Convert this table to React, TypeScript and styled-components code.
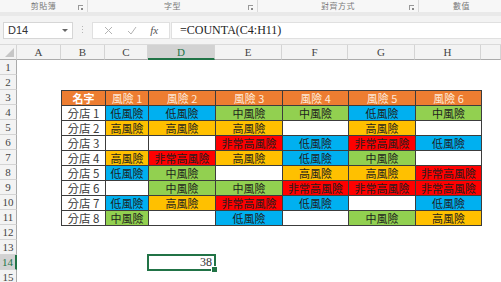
import React from "react";
import styled, { createGlobalStyle } from "styled-components";

type Level = "low" | "mid" | "high" | "vhigh" | "";

const GlobalStyle = createGlobalStyle`
  html, body {
    margin: 0;
    padding: 0;
    background: #fff;
  }
`;

const fills: Record<string, string> = {
  low: "#00b0f0",
  mid: "#92d050",
  high: "#ffc000",
  vhigh: "#ff0000",
  "": "#ffffff",
};

const labels: Record<string, string> = {
  low: "低風險",
  mid: "中風險",
  high: "高風險",
  vhigh: "非常高風險",
  "": "",
};

const rows: { name: string; risks: Level[] }[] = [
  { name: "分店 1", risks: ["low", "low", "mid", "mid", "low", "mid"] },
  { name: "分店 2", risks: ["high", "high", "high", "", "high", ""] },
  { name: "分店 3", risks: ["", "", "vhigh", "low", "vhigh", "low"] },
  { name: "分店 4", risks: ["high", "vhigh", "high", "low", "mid", ""] },
  { name: "分店 5", risks: ["low", "mid", "", "high", "high", "vhigh"] },
  { name: "分店 6", risks: ["", "mid", "mid", "vhigh", "vhigh", "vhigh"] },
  { name: "分店 7", risks: ["low", "high", "vhigh", "low", "", "low"] },
  { name: "分店 8", risks: ["mid", "", "low", "", "mid", "high"] },
];

const columns = ["A", "B", "C", "D", "E", "F", "G", "H", ""];

const Page = styled.div`
  width: 501px;
  height: 282px;
  overflow: hidden;
  background: #fff;
  font-family: "Noto Sans CJK TC", "Noto Sans", sans-serif;
`;

/* ribbon group labels */
const Ribbon = styled.div`
  display: flex;
  height: 12px;
  background: #f7f7f7;
  border-bottom: 4px solid #e9e9e9;
`;

const Group = styled.div<{ $w: number; $last?: boolean }>`
  position: relative;
  flex: 0 0 ${({ $w }) => $w}px;
  display: flex;
  align-items: center;
  justify-content: center;
  border-right: ${({ $last }) => ($last ? "none" : "1px solid #dadada")};
  font-size: 8px;
  line-height: 12px;
  color: #7a7a7a;
  letter-spacing: 0.5px;
`;

const Launcher = styled.span`
  position: absolute;
  right: 4px;
  bottom: 2px;
  width: 4px;
  height: 4px;
  border-left: 1px solid #999;
  border-top: 1px solid #999;
  &::after {
    content: "";
    position: absolute;
    right: 0;
    bottom: 0;
    width: 2px;
    height: 2px;
    background: #888;
  }
`;

/* formula bar */
const FormulaRow = styled.div`
  display: flex;
  align-items: center;
  height: 28px;
  background: #f3f3f3;
`;

const NameBox = styled.div`
  display: flex;
  align-items: center;
  margin-left: 3px;
  width: 70px;
  height: 17px;
  box-sizing: border-box;
  background: #fff;
  border: 1px solid #d6d6d6;
  padding-left: 4px;
  font-family: "Liberation Sans", Arial, sans-serif;
  font-size: 11px;
  color: #333;
`;

const Caret = styled.span`
  margin-left: auto;
  margin-right: 4px;
  width: 0;
  height: 0;
  border-left: 3px solid transparent;
  border-right: 3px solid transparent;
  border-top: 3px solid #666;
`;

const Dots = styled.div`
  margin-left: 9px;
  width: 1px;
  height: 9px;
  background: repeating-linear-gradient(
    to bottom,
    #b5b5b5 0 1px,
    transparent 1px 3px
  );
`;

const FxBox = styled.div`
  display: flex;
  align-items: center;
  justify-content: space-around;
  margin-left: 9px;
  width: 78px;
  height: 17px;
  box-sizing: border-box;
  background: #fff;
  border: 1px solid #e0e0e0;
  padding: 0 4px;
`;

const Fx = styled.span`
  font-family: "Liberation Serif", serif;
  font-style: italic;
  font-size: 11px;
  color: #555;
`;

const FormulaInput = styled.div`
  flex: 1;
  display: flex;
  align-items: center;
  margin-left: 1px;
  height: 17px;
  box-sizing: border-box;
  background: #fff;
  border: 1px solid #e0e0e0;
  border-right: none;
  padding-left: 8px;
  font-family: "Liberation Serif", serif;
  font-size: 12px;
  color: #222;
`;

/* worksheet */
const Sheet = styled.div`
  display: grid;
  grid-template-columns: 17px 44px 44px 43px 67px 67px 66px 67px 66px 1fr;
  grid-template-rows: 15px repeat(15, 15px);
  border-top: 1px solid #dadada;
  background: #fff;
`;

const Corner = styled.div`
  position: relative;
  grid-column: 1;
  grid-row: 1;
  background: #f3f3f3;
  border-right: 1px solid #d4d4d4;
  border-bottom: 1px solid #ababab;
  &::after {
    content: "";
    position: absolute;
    right: 2px;
    bottom: 2px;
    border-left: 9px solid transparent;
    border-bottom: 9px solid #c6c6c6;
  }
`;

const ColHead = styled.div<{ $active?: boolean }>`
  grid-row: 1;
  display: flex;
  align-items: center;
  justify-content: center;
  background: ${({ $active }) => ($active ? "#d2d2d2" : "#f3f3f3")};
  border-right: 1px solid #d4d4d4;
  border-bottom: ${({ $active }) =>
    $active ? "2px solid #217346" : "1px solid #ababab"};
  font-family: "Liberation Serif", serif;
  font-size: 11px;
  color: ${({ $active }) => ($active ? "#217346" : "#444")};
`;

const RowHead = styled.div<{ $active?: boolean }>`
  grid-column: 1;
  display: flex;
  align-items: center;
  justify-content: center;
  background: ${({ $active }) => ($active ? "#d2d2d2" : "#f3f3f3")};
  border-bottom: 1px solid #d4d4d4;
  border-right: ${({ $active }) =>
    $active ? "2px solid #217346" : "1px solid #ababab"};
  font-family: "Liberation Serif", serif;
  font-size: 11px;
  color: ${({ $active }) => ($active ? "#217346" : "#444")};
`;

const Table = styled.div`
  grid-column: 3 / 10;
  grid-row: 4 / 13;
  align-self: start;
  justify-self: start;
  display: grid;
  grid-template-columns: 43px 42px 66px 66px 65px 66px 65px;
  grid-auto-rows: 14px;
  gap: 1px;
  padding: 1px;
  background: #3c3c3c;
  position: relative;
  z-index: 1;
`;

const Cell = styled.div<{ $fill: string; $head?: boolean }>`
  display: flex;
  align-items: center;
  justify-content: center;
  background: ${({ $fill }) => $fill};
  font-size: 11px;
  line-height: 13px;
  white-space: nowrap;
  color: ${({ $head }) => ($head ? "#fde9d9" : "#1e1e1e")};
`;

const NameHead = styled(Cell)`
  font-weight: bold;
  color: #fff;
`;

const ShopCell = styled(Cell)`
  color: #3a3a3a;
  font-size: 11.5px;
`;

const Selected = styled.div`
  position: relative;
  grid-column: 5;
  grid-row: 15;
  margin: -1px;
  border: 2px solid #217346;
  display: flex;
  align-items: center;
  justify-content: flex-end;
  padding-right: 2px;
  font-family: "Liberation Serif", serif;
  font-size: 12px;
  color: #333;
`;

const Handle = styled.span`
  position: absolute;
  right: -4px;
  bottom: -4px;
  width: 5px;
  height: 5px;
  background: #217346;
  border: 1px solid #fff;
`;

const Cross = () => (
  <svg width="9" height="9" viewBox="0 0 9 9">
    <path d="M1 1L8 8M8 1L1 8" stroke="#b3b3b3" strokeWidth="1" />
  </svg>
);

const Check = () => (
  <svg width="10" height="9" viewBox="0 0 10 9">
    <path d="M1 5L4 8L9 1" stroke="#b3b3b3" strokeWidth="1" fill="none" />
  </svg>
);

export default function App() {
  return (
    <Page>
      <GlobalStyle />
      <Ribbon>
        <Group $w={87}>
          剪貼簿
          <Launcher />
        </Group>
        <Group $w={169}>
          字型
          <Launcher />
        </Group>
        <Group $w={160}>
          對齊方式
          <Launcher />
        </Group>
        <Group $w={85} $last>
          數值
        </Group>
      </Ribbon>

      <FormulaRow>
        <NameBox>
          D14
          <Caret />
        </NameBox>
        <Dots />
        <FxBox>
          <Cross />
          <Check />
          <Fx>fx</Fx>
        </FxBox>
        <FormulaInput>=COUNTA(C4:H11)</FormulaInput>
      </FormulaRow>

      <Sheet>
        <Corner />
        {columns.map((c, i) => (
          <ColHead
            key={i}
            $active={c === "D"}
            style={{ gridColumn: i + 2 }}
          >
            {c}
          </ColHead>
        ))}
        {Array.from({ length: 15 }, (_, i) => (
          <RowHead key={i} $active={i + 1 === 14} style={{ gridRow: i + 2 }}>
            {i + 1}
          </RowHead>
        ))}

        <Table>
          <NameHead $fill="#ed7d31">名字</NameHead>
          {[1, 2, 3, 4, 5, 6].map((n) => (
            <Cell key={n} $fill="#ed7d31" $head>
              風險 {n}
            </Cell>
          ))}
          {rows.map((r) => (
            <React.Fragment key={r.name}>
              <ShopCell $fill="#fff">{r.name}</ShopCell>
              {r.risks.map((lv, j) => (
                <Cell key={j} $fill={fills[lv]}>
                  {labels[lv]}
                </Cell>
              ))}
            </React.Fragment>
          ))}
        </Table>

        <Selected>
          38
          <Handle />
        </Selected>
      </Sheet>
    </Page>
  );
}
